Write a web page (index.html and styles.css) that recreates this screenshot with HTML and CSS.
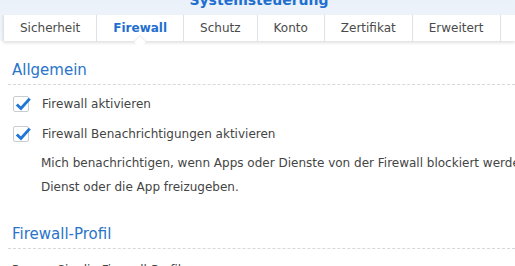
FILE: index.html
```html
<!DOCTYPE html>
<html lang="de">
<head>
  <meta charset="UTF-8" />
  <title>Systemsteuerung</title>
  <link rel="stylesheet" href="styles.css">
</head>
<body>

  <div class="top">
    <h1 class="title">Systemsteuerung</h1>
    <nav class="tabs">
      <span class="tab">Sicherheit</span>
      <span class="tab active">Firewall</span>
      <span class="tab">Schutz</span>
      <span class="tab">Konto</span>
      <span class="tab">Zertifikat</span>
      <span class="tab">Erweitert</span>
    </nav>
  </div>

  <main class="content">
    <section>
      <h2>Allgemein</h2>
      <label class="check"><span class="box"><svg viewBox="0 0 16 16"><path d="M2.5 8.5 L6.2 12 L14 3.2" /></svg></span>Firewall aktivieren</label>
      <label class="check"><span class="box"><svg viewBox="0 0 16 16"><path d="M2.5 8.5 L6.2 12 L14 3.2" /></svg></span>Firewall Benachrichtigungen aktivieren</label>
      <p class="note">Mich benachrichtigen, wenn Apps oder Dienste von der Firewall blockiert werden, um den Dienst oder die App freizugeben.</p>
    </section>

    <section>
      <h2>Firewall-Profil</h2>
      <p class="desc">Passen Sie die Firewall-Profile an.</p>
    </section>
  </main>

</body>
</html>
```

FILE: styles.css
```css
body {
  margin: 0;
  font-family: "DejaVu Sans", Verdana, sans-serif;
  font-size: 12px;
  color: #444;
  background: #fff;
  overflow: hidden;
  width: 515px;
  height: 266px;
}
.top {
  background: linear-gradient(#e9f0f9, #f3f6fb);
  padding-left: 3px;
}
.title {
  margin: -9px 0 0;
  height: 24px;
  line-height: 18px;
  text-align: center;
  font-size: 14px;
  font-weight: bold;
  color: #1f6fd0;
}
.tabs {
  display: flex;
  background: #fff;
  height: 26px;
  align-items: center;
  border-left: 1px solid #dde2e8;
  box-shadow: 0 2px 3px rgba(0,0,0,0.12);
  position: relative;
}
.tab {
  padding: 0 16px;
  height: 26px;
  line-height: 26px;
  border-right: 1px solid #dde2e8;
  color: #4a4a4a;
  font-size: 12px;
}
.tab.active {
  color: #1f6fd0;
  font-weight: bold;
  position: relative;
}
.tab.active::after {
  content: "";
  position: absolute;
  left: 50%;
  bottom: -5px;
  width: 8px;
  height: 8px;
  margin-left: -4px;
  background: #fff;
  transform: rotate(45deg);
  box-shadow: -1px -1px 1px rgba(0,0,0,0.08);
}
.content {
  padding: 20px 0 0 8px;
}
section {
  margin-bottom: 26px;
}
h2 {
  margin: 0 0 4px;
  padding: 0 0 5px 4px;
  font-size: 15px;
  font-weight: normal;
  color: #2a74c9;
  border-bottom: 1px dashed #d6d9dc;
}
.check {
  display: flex;
  align-items: center;
  height: 30px;
  padding-left: 5px;
}
.box {
  width: 14px;
  height: 14px;
  border: 1px solid #c9cdd2;
  border-radius: 2px;
  margin-right: 13px;
  position: relative;
}
.box svg {
  position: absolute;
  left: 0;
  top: -2px;
  width: 18px;
  height: 18px;
  fill: none;
  stroke: #1f76d8;
  stroke-width: 2.6;
}
.note {
  margin: 2px 0 0 33px;
  line-height: 24px;
  width: 550px;
}
.desc {
  margin: 14px 0 0 4px;
}
```
